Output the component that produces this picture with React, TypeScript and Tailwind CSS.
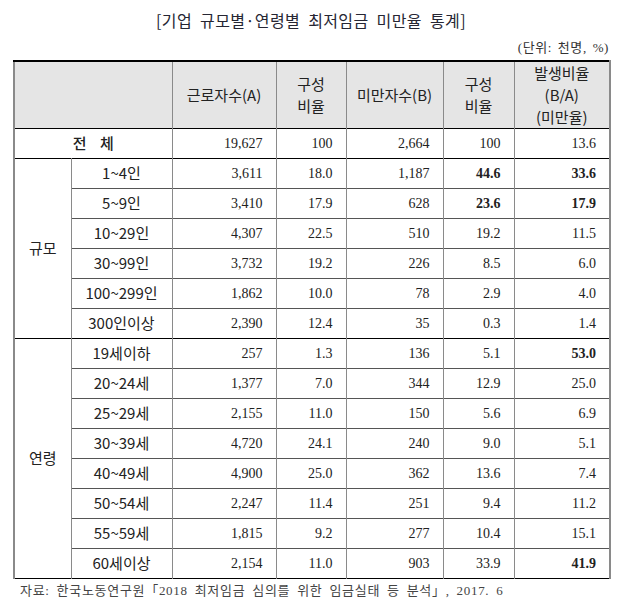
import React from 'react';

type Row = {
  label: string;
  a: string;
  aRate: string;
  b: string;
  bRate: string;
  ratio: string;
  boldB?: boolean;
  boldRatio?: boolean;
};

const sizeRows: Row[] = [
  { label: '1~4인', a: '3,611', aRate: '18.0', b: '1,187', bRate: '44.6', ratio: '33.6', boldB: true, boldRatio: true },
  { label: '5~9인', a: '3,410', aRate: '17.9', b: '628', bRate: '23.6', ratio: '17.9', boldB: true, boldRatio: true },
  { label: '10~29인', a: '4,307', aRate: '22.5', b: '510', bRate: '19.2', ratio: '11.5' },
  { label: '30~99인', a: '3,732', aRate: '19.2', b: '226', bRate: '8.5', ratio: '6.0' },
  { label: '100~299인', a: '1,862', aRate: '10.0', b: '78', bRate: '2.9', ratio: '4.0' },
  { label: '300인이상', a: '2,390', aRate: '12.4', b: '35', bRate: '0.3', ratio: '1.4' },
];

const ageRows: Row[] = [
  { label: '19세이하', a: '257', aRate: '1.3', b: '136', bRate: '5.1', ratio: '53.0', boldRatio: true },
  { label: '20~24세', a: '1,377', aRate: '7.0', b: '344', bRate: '12.9', ratio: '25.0' },
  { label: '25~29세', a: '2,155', aRate: '11.0', b: '150', bRate: '5.6', ratio: '6.9' },
  { label: '30~39세', a: '4,720', aRate: '24.1', b: '240', bRate: '9.0', ratio: '5.1' },
  { label: '40~49세', a: '4,900', aRate: '25.0', b: '362', bRate: '13.6', ratio: '7.4' },
  { label: '50~54세', a: '2,247', aRate: '11.4', b: '251', bRate: '9.4', ratio: '11.2' },
  { label: '55~59세', a: '1,815', aRate: '9.2', b: '277', bRate: '10.4', ratio: '15.1' },
  { label: '60세이상', a: '2,154', aRate: '11.0', b: '903', bRate: '33.9', ratio: '41.9', boldRatio: true },
];

const sans = "font-['Noto_Sans_CJK_KR',sans-serif]";
const serif = "font-['Liberation_Serif','Noto_Sans_CJK_KR',serif]";
const num = `${serif} text-right pr-[13px] text-[14px] border-l border-[#8a8a8a]`;

function DataRow({ row, group, span, first }: { row: Row; group: string; span: number; first: boolean }) {
  return (
    <tr className={`h-[30px] ${first ? 'border-t border-t-black' : 'border-t border-t-[#555]'}`}>
      {first && (
        <td rowSpan={span} className={`${sans} text-center text-[15px] align-middle`}>
          {group}
        </td>
      )}
      <td className={`${sans} text-center text-[15px] border-l border-[#8a8a8a]`}>{row.label}</td>
      <td className={num}>{row.a}</td>
      <td className={num}>{row.aRate}</td>
      <td className={num}>{row.b}</td>
      <td className={`${num} ${row.boldB ? 'font-bold' : ''}`}>{row.bRate}</td>
      <td className={`${num} ${row.boldRatio ? 'font-bold' : ''}`}>{row.ratio}</td>
    </tr>
  );
}

export default function App() {
  return (
    <div className="w-[622px] h-[602px] bg-white text-[#222]">
      <h1 className={`${sans} pt-[8px] text-center text-[16px] leading-[24px] tracking-[0.4px] [word-spacing:4px] text-[#262633]`}>
        [기업 규모별·연령별 최저임금 미만율 통계]
      </h1>
      <p className={`${serif} pr-[13px] pt-[3px] text-right text-[13px] leading-[25px] tracking-[0.6px] [word-spacing:2px] text-[#333]`}>
        (단위: 천명, %)
      </p>
      <table className="ml-[13px] w-[596px] table-fixed border-collapse border-x-2 border-x-[#8a8a8a] border-t-2 border-t-black border-b border-b-black">
        <colgroup>
          <col className="w-[57px]" />
          <col className="w-[101px]" />
          <col className="w-[104px]" />
          <col className="w-[70px]" />
          <col className="w-[97px]" />
          <col className="w-[71px]" />
          <col className="w-[96px]" />
        </colgroup>
        <thead>
          <tr className={`h-[64px] bg-[#e5e5e5] ${sans} text-[15px] leading-[22px] text-[#222]`}>
            <th colSpan={2} className="font-normal" />
            <th className="font-normal border-l border-[#8a8a8a]">근로자수(A)</th>
            <th className="font-normal border-l border-[#8a8a8a]">
              구성
              <br />
              비율
            </th>
            <th className="font-normal border-l border-[#8a8a8a]">미만자수(B)</th>
            <th className="font-normal border-l border-[#8a8a8a]">
              구성
              <br />
              비율
            </th>
            <th className="font-normal border-l border-[#8a8a8a]">
              발생비율
              <br />
              (B/A)
              <br />
              (미만율)
            </th>
          </tr>
        </thead>
        <tbody>
          <tr className="h-[30px] border-t border-t-black">
            <td colSpan={2} className={`${sans} text-center text-[15px] font-medium`}>
              전&nbsp;&nbsp;&nbsp;&nbsp;체
            </td>
            <td className={num}>19,627</td>
            <td className={num}>100</td>
            <td className={num}>2,664</td>
            <td className={num}>100</td>
            <td className={num}>13.6</td>
          </tr>
          {sizeRows.map((r, i) => (
            <DataRow key={r.label} row={r} group="규모" span={sizeRows.length} first={i === 0} />
          ))}
          {ageRows.map((r, i) => (
            <DataRow key={r.label} row={r} group="연령" span={ageRows.length} first={i === 0} />
          ))}
        </tbody>
      </table>
      <p className={`${serif} pl-[20px] pt-[2px] text-[13px] leading-[20px] tracking-[0.7px] [word-spacing:3px] text-[#444]`}>
        자료: 한국노동연구원「2018 최저임금 심의를 위한 임금실태 등 분석」, 2017. 6
      </p>
    </div>
  );
}
